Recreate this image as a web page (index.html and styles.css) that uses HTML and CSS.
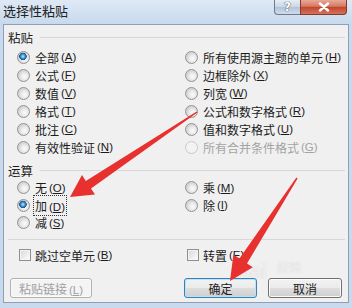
FILE: index.html
```html
<!DOCTYPE html>
<html lang="zh-CN">
<head>
    <meta charset="UTF-8">
    <meta name="viewport" content="width=device-width, initial-scale=1.0">
    <title>选择性粘贴</title>
    <link rel="stylesheet" href="styles.css">
</head>
<body>
<div class="window">
    <div class="titlebar">
        <span class="title">选择性粘贴</span>
        <div class="caption">
            <span class="cap help">?</span>
            <span class="cap close">
                <svg width="14" height="10" viewBox="0 0 14 10"><path d="M3 1.5 L11 8.5 M11 1.5 L3 8.5" stroke="#fff" stroke-width="2.4" stroke-linecap="round"/></svg>
            </span>
        </div>
    </div>

    <div class="client">
        <div class="group-head"><span>粘贴</span><i class="rule"></i></div>
        <div class="opts paste">
            <div class="opt"><span class="radio on"></span>全部<span class="key">(<u>A</u>)</span></div>
            <div class="opt"><span class="radio"></span>所有使用源主题的单元<span class="key">(<u>H</u>)</span></div>
            <div class="opt"><span class="radio"></span>公式<span class="key">(<u>F</u>)</span></div>
            <div class="opt"><span class="radio"></span>边框除外<span class="key">(<u>X</u>)</span></div>
            <div class="opt"><span class="radio"></span>数值<span class="key">(<u>V</u>)</span></div>
            <div class="opt"><span class="radio"></span>列宽<span class="key">(<u>W</u>)</span></div>
            <div class="opt"><span class="radio"></span>格式<span class="key">(<u>T</u>)</span></div>
            <div class="opt"><span class="radio"></span>公式和数字格式<span class="key">(<u>R</u>)</span></div>
            <div class="opt"><span class="radio"></span>批注<span class="key">(<u>C</u>)</span></div>
            <div class="opt"><span class="radio"></span>值和数字格式<span class="key">(<u>U</u>)</span></div>
            <div class="opt"><span class="radio"></span>有效性验证<span class="key">(<u>N</u>)</span></div>
            <div class="opt off"><span class="radio"></span>所有合并条件格式<span class="key">(<u>G</u>)</span></div>
        </div>

        <div class="group-head ops-head"><span>运算</span><i class="rule"></i></div>
        <div class="opts ops">
            <div class="opt"><span class="radio"></span>无<span class="key">(<u>O</u>)</span></div>
            <div class="opt"><span class="radio"></span>乘<span class="key">(<u>M</u>)</span></div>
            <div class="opt"><span class="radio on"></span><span class="focus">加<span class="key">(<u>D</u>)</span></span></div>
            <div class="opt"><span class="radio"></span>除<span class="key">(<u>I</u>)</span></div>
            <div class="opt"><span class="radio"></span>减<span class="key">(<u>S</u>)</span></div>
        </div>

        <i class="rule sep"></i>

        <div class="opts checks">
            <div class="opt"><span class="check"></span>跳过空单元<span class="key">(<u>B</u>)</span></div>
            <div class="opt"><span class="check"></span>转置<span class="key">(<u>E</u>)</span></div>
        </div>

        <div class="btns">
            <button class="btn disabled">粘贴链接<span class="key">(<u>L</u>)</span></button>
            <button class="btn ok">确定</button>
            <button class="btn cancel">取消</button>
        </div>
    </div>

    <div class="watermark">
        <span class="wm-bai">Bai</span><span class="wm-jy">经验</span>
    </div>

    <svg class="arrows" width="352" height="308" viewBox="0 0 352 308">
        <polygon fill="#e8312e" points="197.4,112.6 91.0,188.5 95.0,194.5 70,197 82.0,175.0 85.8,181.0 196.6,111.4"/>
        <polygon fill="#e8312e" points="297.6,178.4 247.0,263.4 252.8,267.2 230,281 233.4,254.6 239.4,258.4 296.4,177.6"/>
    </svg>
</div>
</body>
</html>
```

FILE: styles.css
```css
*{
    box-sizing: border-box;
}
body{
    margin: 0;
    font-family: "Noto Sans CJK SC", "Noto Sans", sans-serif;
    font-size: 12px;
    color: #1b1b1b;
}
.window{
    position: relative;
    width: 352px;
    height: 308px;
    padding: 0 3px 5px;
    background: #c9daee;
    display: flex;
    flex-direction: column;
    overflow: hidden;
}

/* title bar */
.titlebar{
    height: 24px;
    margin: 0 -3px;
    padding: 0 5px 0 3px;
    display: flex;
    align-items: flex-start;
    background: linear-gradient(180deg, #dfe9f5 0%, #d0dff0 60%, #c9daee 100%);
}
.title{
    font-size: 13px;
    line-height: 22px;
    color: #222;
}
.caption{
    margin-left: auto;
    display: flex;
}
.cap{
    height: 15px;
    display: flex;
    align-items: center;
    justify-content: center;
    border: 1px solid #6b7b90;
    border-top: none;
}
.help{
    width: 26px;
    border-right: none;
    border-radius: 0 0 0 4px;
    background: linear-gradient(180deg, #e6edf6 0%, #cad6e4 50%, #b3c3d6 51%, #cfdcea 100%);
    color: #fff;
    font-weight: bold;
    font-size: 12px;
    line-height: 13px;
    text-shadow: 0 0 1px #3a4a60, 0 0 1px #3a4a60;
    font-family: "DejaVu Sans", sans-serif;
}
.close{
    width: 47px;
    border-color: #803a2e;
    border-radius: 0 0 4px 0;
    background: linear-gradient(180deg, #e9a898 0%, #d67a63 45%, #c2462d 52%, #d4735b 100%);
}

/* client area */
.client{
    flex: 1;
    background: #f0f0f0;
    border: 1px solid #8e9fb6;
    padding: 4px 6px 4px 4px;
    display: flex;
    flex-direction: column;
}
.group-head{
    height: 16px;
    display: flex;
    align-items: center;
    gap: 7px;
    font-size: 12.5px;
    margin-right: -3px;
}
.rule{
    display: block;
    flex: 1;
    height: 1px;
    background: #d8d8d8;
}
.ops-head{
    margin-top: 6px;
}
.sep{
    flex: none;
    margin: 7.5px -3px 0 0;
}

.opts{
    display: grid;
    grid-template-columns: 168px 1fr;
    padding-left: 9px;
}
.paste{
    margin-top: 3px;
}
.ops{
    margin-top: 1px;
}
.ops .opt{
    height: 17.5px;
}
.checks{
    margin-top: 6px;
}
.opt{
    height: 18px;
    display: flex;
    align-items: center;
    white-space: nowrap;
}
.key{
    margin-left: 2px;
    font-family: "Liberation Sans", sans-serif;
    font-size: 11.5px;
}
.key u{
    text-underline-offset: 1px;
}
.off{
    color: #a3a3a3;
}
.radio{
    flex: none;
    width: 13px;
    height: 13px;
    margin-right: 5px;
    border-radius: 50%;
    border: 1px solid #939393;
    background: radial-gradient(circle at 60% 60%, #fbfbfb 0, #ececec 3px, #d4d4d4 6px);
}
.radio.on{
    background:
        radial-gradient(circle at 45% 40%, #bfeaff 0, #3d9ad8 2px, #14528e 3.5px, rgba(20,82,142,0) 4px),
        radial-gradient(circle at 60% 60%, #fbfbfb 0, #ececec 3px, #d4d4d4 6px);
}
.off .radio{
    border-color: #c9c9c9;
    background: #f3f3f3;
}
.check{
    flex: none;
    width: 12px;
    height: 12px;
    margin: 0 4px 0 2px;
    border: 1px solid #8f8f8f;
    background: linear-gradient(135deg, #d6d6d6 0%, #f2f2f2 70%, #ffffff 100%);
    box-shadow: inset 0 0 0 1px #f4f4f4;
}
.focus{
    outline: 1px dotted #333;
    outline-offset: 1px;
}

/* buttons */
.btns{
    display: flex;
    margin: 14px 0 0 2px;
}
.btn{
    height: 20px;
    padding: 0;
    font-family: inherit;
    font-size: 12px;
    color: #1b1b1b;
    border: 1px solid #707070;
    border-radius: 3px;
    background: linear-gradient(180deg, #f2f2f2 0%, #ebebeb 48%, #dddddd 52%, #cfcfcf 100%);
    box-shadow: inset 0 0 0 1px #fbfbfb;
}
.disabled{
    width: 82px;
    color: #a0a0a0;
    border-color: #adb2b5;
    background: #f4f4f4;
}
.ok{
    width: 73px;
    margin-left: auto;
    border-color: #3c7fb1;
    box-shadow: inset 0 0 0 1px #b6e4f8;
}
.cancel{
    width: 74px;
    margin-left: 11px;
}

/* watermark and arrows drawn over the dialog */
.watermark{
    position: absolute;
    left: 236px;
    top: 259px;
    display: flex;
    align-items: flex-start;
    color: rgba(255, 255, 255, 0.7);
    text-shadow: 0 0 1px rgba(120, 120, 120, 0.35);
    pointer-events: none;
}
.wm-bai{
    font-family: "Liberation Sans", sans-serif;
    font-weight: bold;
    font-size: 20px;
    line-height: 24px;
}
.wm-jy{
    margin-left: 10px;
    font-size: 12px;
    line-height: 16px;
}
.arrows{
    position: absolute;
    left: 0;
    top: 0;
    pointer-events: none;
}
```
